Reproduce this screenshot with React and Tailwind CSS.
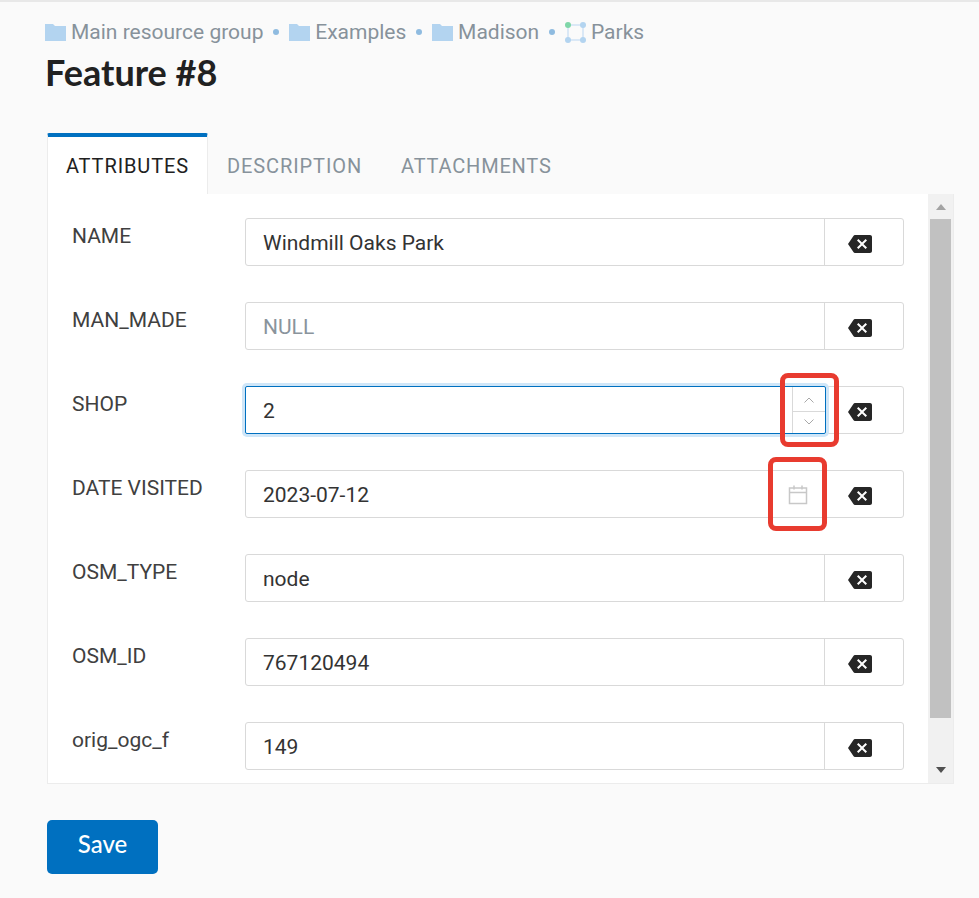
import React from 'react';

const rows = [
    { label: 'NAME', value: 'Windmill Oaks Park' },
    { label: 'MAN_MADE', value: 'NULL', placeholder: true },
    { label: 'SHOP', value: '2', kind: 'number' },
    { label: 'DATE VISITED', value: '2023-07-12', kind: 'date' },
    { label: 'OSM_TYPE', value: 'node' },
    { label: 'OSM_ID', value: '767120494' },
    { label: 'orig_ogc_f', value: '149' },
];

const FolderIcon = () => (
    <svg width="21" height="17" viewBox="0 0 21 17" className="shrink-0">
        <path d="M0 0h8l2 2h11v15H0z" fill="#b3d4f0" />
    </svg>
);

const LayerIcon = () => (
    <svg width="21" height="21" viewBox="0 0 21 21" className="shrink-0">
        <rect x="3" y="3" width="15" height="15" fill="none" stroke="#cfe2f5" strokeWidth="1.5" />
        <circle cx="3" cy="3" r="3" fill="#7fd6a8" />
        <circle cx="18" cy="3" r="3" fill="#b3d4f0" />
        <circle cx="3" cy="18" r="3" fill="#b3d4f0" />
        <circle cx="18" cy="18" r="3" fill="#b3d4f0" />
    </svg>
);

const BackspaceIcon = () => (
    <svg width="24" height="24" viewBox="0 0 24 24" fill="#262626">
        <path d="M22 3H7c-.69 0-1.23.35-1.59.89L0 12l5.41 8.11c.36.54.9.89 1.59.89h15c1.1 0 2-.9 2-2V5c0-1.1-.9-2-2-2zm-3 12.59L17.59 17 14 13.41 10.41 17 9 15.59 12.59 12 9 8.41 10.41 7 14 10.59 17.59 7 19 8.41 15.41 12 19 15.59z" />
    </svg>
);

const CalendarIcon = () => (
    <svg width="20" height="20" viewBox="0 0 20 20" fill="none" stroke="#c8c8c8" strokeWidth="1.5">
        <rect x="1.5" y="3" width="17" height="15.5" />
        <path d="M1.5 7.5h17M6 0.5v4M14 0.5v4" />
    </svg>
);

const Crumb = ({ icon, children }) => (
    <span className="flex items-center gap-[5px]">
        {icon}
        <span className="pt-[2px]">{children}</span>
    </span>
);

const Dot = () => <span className="mx-[9.9px] w-[6px] h-[6px] rounded-full bg-[#8fbbe0]" />;

function Spinner() {
    return (
        <div className="relative w-[33px] h-full border-l border-[#d9d9d9] flex flex-col shrink-0">
            <div className="flex-1 flex items-center justify-center border-b border-[#d9d9d9] pt-[2px]">
                <svg width="12" height="8" viewBox="0 0 12 8" fill="none" stroke="#a8a8a8"><path d="M1.5 6.5L6 2l4.5 4.5" /></svg>
            </div>
            <div className="flex-1 flex items-center justify-center">
                <svg width="12" height="8" viewBox="0 0 12 8" fill="none" stroke="#a8a8a8"><path d="M1.5 1.5L6 6l4.5-4.5" /></svg>
            </div>
            <div className="absolute left-[-13px] top-[-14px] w-[59px] h-[74px] border-[5px] border-[#e83b2f] rounded-[8px]" />
        </div>
    );
}

function Row({ label, value, placeholder, kind }) {
    const focused = kind === 'number';
    return (
        <div className="flex h-[48px] mb-[36px]">
            <div className="w-[173px] shrink-0 pt-[5px] text-[21px] leading-[26px] text-[#404040]">{label}</div>
            <div className="flex-1 flex h-[48px] bg-white border border-[#d9d9d9] rounded-[3px]">
                <div
                    className={
                        focused
                            ? 'relative z-10 flex-1 flex items-center pl-[17px] -my-px -ml-px h-[48px] border border-[#0070c0] rounded-[2px] shadow-[0_0_0_3px_#cfe6f8] bg-white'
                            : 'relative flex-1 flex items-center pl-[17px]'
                    }
                >
                    <span className={placeholder ? 'flex-1 pt-[4px] text-[21px] text-[#8a949c]' : 'flex-1 pt-[4px] text-[21px] text-[#333333]'}>{value}</span>
                    {kind === 'number' && <Spinner />}
                    {kind === 'date' && (
                        <div className="relative mr-[16px] mt-[2px] w-[20px] h-[20px]">
                            <CalendarIcon />
                            <div className="absolute left-[-20px] top-[-28px] w-[59px] h-[74px] border-[5px] border-[#e83b2f] rounded-[8px]" />
                        </div>
                    )}
                </div>
                <div className={focused ? 'w-[77px] shrink-0 flex items-center justify-center pr-[10px] pt-[4px]' : 'w-[79px] shrink-0 flex items-center justify-center border-l border-[#d9d9d9] pr-[8px] pt-[4px]'}>
                    <BackspaceIcon />
                </div>
            </div>
        </div>
    );
}

export default function App() {
    return (
        <div className="min-h-[898px] bg-[#fafafa] border-t-2 border-[#e8e8e8] font-['Roboto',sans-serif] pl-[45px] pr-[25px]">
            <div className="flex items-center h-[40px] mt-[10px] text-[21px] text-[#87929b]">
                <Crumb icon={<FolderIcon />}>Main resource group</Crumb>
                <Dot />
                <Crumb icon={<FolderIcon />}>Examples</Crumb>
                <Dot />
                <Crumb icon={<FolderIcon />}>Madison</Crumb>
                <Dot />
                <Crumb icon={<LayerIcon />}>Parks</Crumb>
            </div>
            <h1 className="-mt-[2px] h-[44px] font-['Lato',sans-serif] font-bold text-[36px] leading-[44px] text-[#212121]">Feature #8</h1>

            <div className="ml-[2px] mt-[39px] flex items-stretch h-[61px] text-[20px] tracking-[0.9px]">
                <div className="w-[161px] bg-white border-x border-[#ececec] border-t-[4px] border-t-[#0070c0] rounded-t-[2px] flex items-center justify-center text-[#212121] pt-px">ATTRIBUTES</div>
                <div className="pl-[19px] pr-[20px] pt-[5px] flex items-center text-[#87929b]">DESCRIPTION</div>
                <div className="pl-[19px] pt-[5px] flex items-center text-[#87929b] tracking-[0.8px]">ATTACHMENTS</div>
            </div>

            <div className="ml-[2px] h-[590px] flex bg-white border-l border-b border-r border-[#ececec]">
                <div className="flex-1 min-w-0 overflow-hidden pt-[24px] pl-[24px] pr-[24px]">
                    {rows.map((row) => (
                        <Row key={row.label} {...row} />
                    ))}
                </div>
                <div className="w-[25px] shrink-0 bg-[#f1f1f1] flex flex-col items-center">
                    <div className="h-[25px] flex items-center justify-center">
                        <div className="w-0 h-0 border-x-[5px] border-x-transparent border-b-[6px] border-b-[#a3a3a3]" />
                    </div>
                    <div className="w-[21px] h-[499px] bg-[#c1c1c1]" />
                    <div className="flex-1 flex items-end justify-center pb-[10px]">
                        <div className="w-0 h-0 border-x-[5px] border-x-transparent border-t-[6px] border-t-[#505050]" />
                    </div>
                </div>
            </div>

            <button className="block ml-[2px] mt-[36px] w-[111px] h-[54px] pb-[6px] rounded-[5px] bg-[#0070c0] text-white font-['Lato',sans-serif] text-[24px] font-medium">Save</button>
        </div>
    );
}
